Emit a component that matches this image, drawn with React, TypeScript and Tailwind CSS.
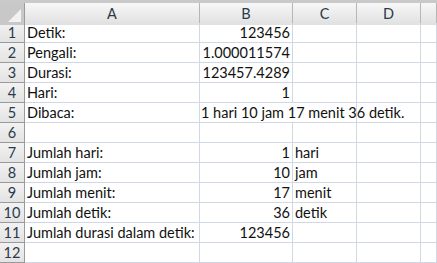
import React from "react";

type Row = {
    a?: string;
    b?: string;
    c?: string;
    bLeft?: boolean;
};

const rows: Row[] = [
    { a: "Detik:", b: "123456" },
    { a: "Pengali:", b: "1.000011574" },
    { a: "Durasi:", b: "123457.4289" },
    { a: "Hari:", b: "1" },
    { a: "Dibaca:", b: "1 hari 10 jam 17 menit 36 detik.", bLeft: true },
    {},
    { a: "Jumlah hari:", b: "1", c: "hari" },
    { a: "Jumlah jam:", b: "10", c: "jam" },
    { a: "Jumlah menit:", b: "17", c: "menit" },
    { a: "Jumlah detik:", b: "36", c: "detik" },
    { a: "Jumlah durasi dalam detik:", b: "123456" },
    {},
];

const cols = "grid grid-cols-[25px_175px_93px_64px_64px_1fr]";
const cell = "h-5 border-r border-b border-[#d0d7e5] px-[2px] leading-[19px] whitespace-nowrap";

export default function App() {
    return (
        <div
            className="h-[263px] w-[437px] overflow-hidden bg-white text-[14.5px] text-[#111]"
            style={{ fontFamily: "'Lato', 'Liberation Sans', sans-serif" }}
        >
            {/* strip above the headers */}
            <div className="h-[3px] bg-[#c9c9c9]" />

            {/* column headers */}
            <div className={`${cols} h-5 border-b border-[#9a9a9a]`}>
                <div className="relative border-r border-[#9a9a9a] bg-[#c8c8c8]">
                    <div className="absolute bottom-[3px] right-[3px] h-0 w-0 border-l-[13px] border-t-[13px] border-l-transparent border-t-transparent border-b-[0px] border-r-[0px]" />
                    <svg className="absolute bottom-[3px] right-[3px]" width="13" height="13">
                        <polygon points="13,0 13,13 0,13" fill="#f2f2f2" />
                    </svg>
                </div>
                {["A", "B", "C", "D", ""].map((h, i) => (
                    <div
                        key={i}
                        className="flex items-center justify-center border-r border-[#b5b5b5] bg-gradient-to-b from-[#f7f7f7] to-[#e0e0e0] text-[#2a3a4a]"
                    >
                        {h}
                    </div>
                ))}
            </div>

            {/* rows */}
            {rows.map((r, i) => (
                <div key={i} className={cols}>
                    <div className="h-5 border-r border-b border-[#9a9a9a] bg-gradient-to-b from-[#f2f2f2] to-[#e3e3e3] text-center leading-[19px] text-[#2a3a4a]">
                        {i + 1}
                    </div>
                    <div className={cell}>{r.a}</div>
                    {r.bLeft ? (
                        <div className="relative h-5 border-b border-[#d0d7e5] px-[2px] leading-[19px] whitespace-nowrap">
                            <span className="absolute left-[1px] top-0">{r.b}</span>
                        </div>
                    ) : (
                        <div className={`${cell} text-right`}>{r.b}</div>
                    )}
                    <div className={r.bLeft ? "h-5 border-r border-b border-[#d0d7e5]" : cell}>{r.c}</div>
                    <div className={cell} />
                    <div className={cell} />
                </div>
            ))}
        </div>
    );
}
